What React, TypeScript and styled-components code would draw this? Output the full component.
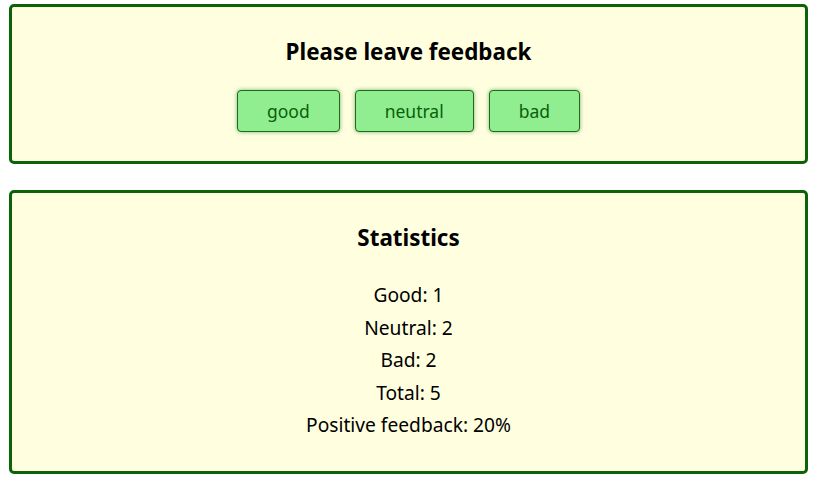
import React from "react";
import styled, { createGlobalStyle } from "styled-components";

const Global = createGlobalStyle`
  html, body { margin: 0; padding: 0; background: #ffffff; }
  body { font-family: "Noto Sans", "Open Sans", sans-serif; color: #000; }
`;

const Page = styled.div`
  display: flex;
  flex-direction: column;
  gap: 26px;
  padding: 4px 14px 0 9px;
`;

const Section = styled.section`
  background: #ffffe0;
  border: 3px solid #0b620b;
  border-radius: 5px;
  padding: 30px 20px 29px;
  display: flex;
  flex-direction: column;
  align-items: center;
`;

const Title = styled.h2`
  margin: 0;
  font-size: 22.4px;
  line-height: 30px;
  font-weight: 700;
`;

const ButtonRow = styled.div`
  display: flex;
  gap: 15px;
  margin-top: 23px;
`;

const FeedbackButton = styled.button`
  font-family: inherit;
  font-size: 17.5px;
  color: #0b5e0b;
  background: #90ee90;
  border: 1px solid #1a6b1a;
  border-radius: 4px;
  height: 42px;
  padding: 0 29px;
  box-shadow: 0 0 4px rgba(30, 110, 30, 0.55);
  cursor: pointer;
`;

const StatsList = styled.ul`
  list-style: none;
  margin: 26px 0 0;
  padding: 0;
  text-align: center;
`;

const StatItem = styled.li`
  font-size: 19.2px;
  line-height: 32.5px;
`;

export default function App() {
  const good = 1, neutral = 2, bad = 2;
  const total = good + neutral + bad;
  const positive = Math.round((good / total) * 100);
  return (
    <>
      <Global />
      <Page>
        <Section>
          <Title>Please leave feedback</Title>
          <ButtonRow>
            <FeedbackButton>good</FeedbackButton>
            <FeedbackButton>neutral</FeedbackButton>
            <FeedbackButton>bad</FeedbackButton>
          </ButtonRow>
        </Section>
        <Section>
          <Title>Statistics</Title>
          <StatsList>
            <StatItem>Good: {good}</StatItem>
            <StatItem>Neutral: {neutral}</StatItem>
            <StatItem>Bad: {bad}</StatItem>
            <StatItem>Total: {total}</StatItem>
            <StatItem>Positive feedback: {positive}%</StatItem>
          </StatsList>
        </Section>
      </Page>
    </>
  );
}
